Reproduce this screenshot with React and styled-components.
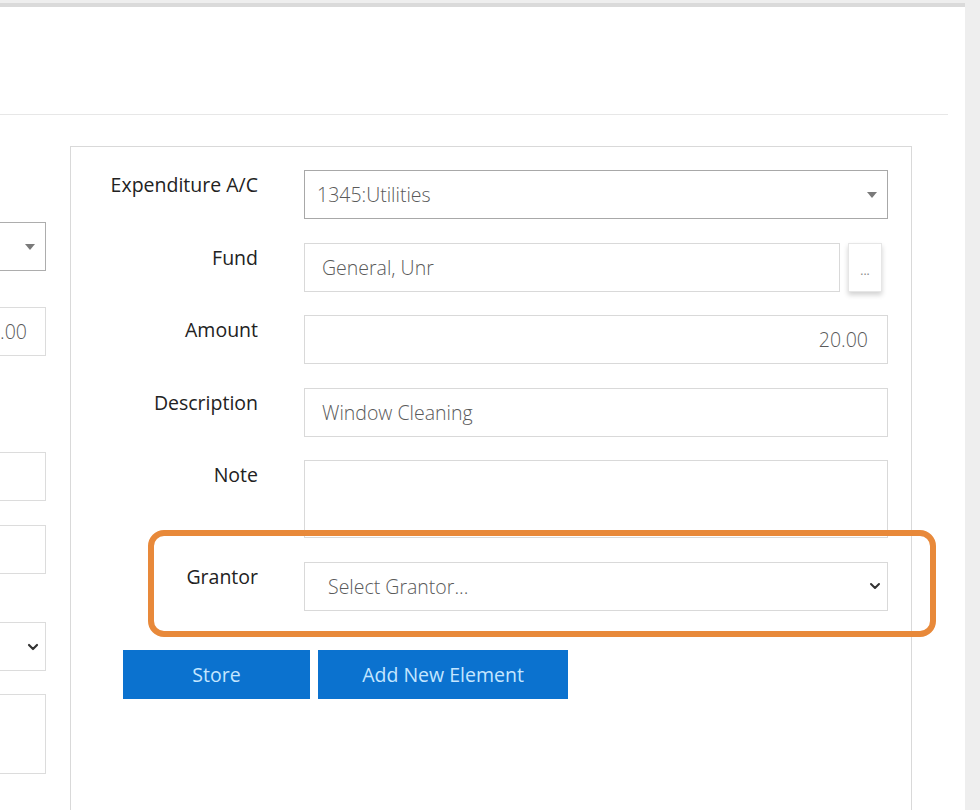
import React from "react";
import styled, { createGlobalStyle } from "styled-components";
import { ChevronDown } from "lucide-react";

const Global = createGlobalStyle`
  html, body { margin: 0; padding: 0; }
  body {
    background: #eeeeee;
    font-family: "Open Sans", "Noto Sans", Arial, sans-serif;
    width: 980px;
    height: 810px;
    overflow: hidden;
  }
`;

const Card = styled.div`
  margin-top: 3px;
  width: 965px;
  height: 807px;
  background: #ffffff;
  border-top: 4px solid #dadada;
  box-sizing: border-box;
  overflow: hidden;
`;

const Header = styled.div`
  height: 107px;
  margin-right: 17px;
  border-bottom: 1px solid #e7e7e7;
`;

const Body = styled.div`
  display: flex;
  gap: 24px;
  align-items: flex-start;
`;

const LeftColumn = styled.div`
  width: 46px;
  flex: none;
  display: flex;
  flex-direction: column;
  padding-top: 107px;
`;

const LeftField = styled.div`
  margin-top: ${(p) => p.$top || 0}px;
  height: ${(p) => p.$h || 49}px;
  box-sizing: border-box;
  border: 1px solid ${(p) => (p.$dark ? "#adadad" : "#dcdcdc")};
  border-left: none;
  display: flex;
  align-items: center;
  justify-content: flex-end;
  padding-right: ${(p) => p.$pr ?? 18}px;
  overflow: hidden;
  font-size: 19.5px;
  font-weight: 300;
  color: #5a5a5a;
  white-space: nowrap;
`;

const Panel = styled.div`
  margin-top: 31px;
  width: 842px;
  height: 700px;
  box-sizing: border-box;
  border: 1px solid #d9d9d9;
  padding: 23px 23px 0 0;
`;

const Form = styled.div`
  display: grid;
  grid-template-columns: 187px 584px;
  column-gap: 46px;
  row-gap: 23.5px;
`;

const Label = styled.div`
  text-align: right;
  font-size: 19.5px;
  line-height: 27px;
  padding-top: 1px;
  color: #222;
`;

const Field = styled.div`
  position: relative;
  height: ${(p) => p.$h || 49}px;
  box-sizing: border-box;
  border: 1px solid ${(p) => (p.$dark ? "#a8a8a8" : "#d9d9d9")};
  display: flex;
  align-items: center;
  justify-content: ${(p) => (p.$right ? "flex-end" : "flex-start")};
  padding: 0 ${(p) => p.$pr ?? (p.$right ? 19 : 12)}px 0 ${(p) => p.$pl ?? 17}px;
  font-size: 19.5px;
  font-weight: 300;
  color: #5a5a5a;
  flex: 1;
  white-space: nowrap;
  background: #fff;
`;

const Triangle = styled.span`
  margin-left: auto;
  width: 0;
  height: 0;
  border-left: 5px solid transparent;
  border-right: 5px solid transparent;
  border-top: 6px solid #7a7a7a;
  margin-right: ${(p) => p.$mr ?? 0}px;
`;

const Chevron = styled(ChevronDown)`
  margin-left: auto;
  color: #333;
`;

const FundRow = styled.div`
  display: flex;
  gap: 8px;
  padding-right: 6px;
`;

const DotsButton = styled.div`
  width: 34px;
  height: 49px;
  box-sizing: border-box;
  border: 1px solid #e6e6e6;
  background: #fff;
  box-shadow: 0 3px 5px rgba(0, 0, 0, 0.18);
  display: flex;
  align-items: flex-end;
  justify-content: center;
  padding-bottom: 12px;
  font-size: 12px;
  color: #888;
`;

const GrantorCell = styled.div`
  position: relative;
  display: flex;
`;

const Highlight = styled.div`
  position: absolute;
  top: -32px;
  bottom: -26px;
  left: -156px;
  right: -48px;
  border: 6px solid #e8893a;
  border-radius: 16px;
  pointer-events: none;
`;

const Buttons = styled.div`
  display: flex;
  gap: 8px;
  margin-top: 39px;
  margin-left: 52px;
`;

const Button = styled.button`
  width: ${(p) => p.$w}px;
  height: 49px;
  border: none;
  background: #0b72cf;
  color: #c4e6ff;
  font-family: "Open Sans", "Noto Sans", Arial, sans-serif;
  font-size: 19.5px;
  padding: 0;
`;

export default function App() {
  return (
    <>
      <Global />
      <Card>
        <Header />
        <Body>
          <LeftColumn>
            <LeftField $dark $pr={10}>
              <Triangle />
            </LeftField>
            <LeftField $top={36}>20.00</LeftField>
            <LeftField $top={96} />
            <LeftField $top={24} />
            <LeftField $top={48} $pr={4}>
              <Chevron size={16} strokeWidth={3.2} />
            </LeftField>
            <LeftField $top={23} $h={80} />
          </LeftColumn>
          <Panel>
            <Form>
              <Label>Expenditure A/C</Label>
              <Field $dark $pl={12} $pr={10}>
                1345:Utilities
                <Triangle />
              </Field>

              <Label>Fund</Label>
              <FundRow>
                <Field>General, Unr</Field>
                <DotsButton>...</DotsButton>
              </FundRow>

              <Label>Amount</Label>
              <Field $right>20.00</Field>

              <Label>Description</Label>
              <Field>Window Cleaning</Field>

              <Label>Note</Label>
              <Field $h={78} />

              <Label>Grantor</Label>
              <GrantorCell>
                <Field $pl={23} $pr={4}>
                  Select Grantor...
                  <Chevron size={16} strokeWidth={3} />
                </Field>
                <Highlight />
              </GrantorCell>
            </Form>
            <Buttons>
              <Button $w={187}>Store</Button>
              <Button $w={250}>Add New Element</Button>
            </Buttons>
          </Panel>
        </Body>
      </Card>
    </>
  );
}
